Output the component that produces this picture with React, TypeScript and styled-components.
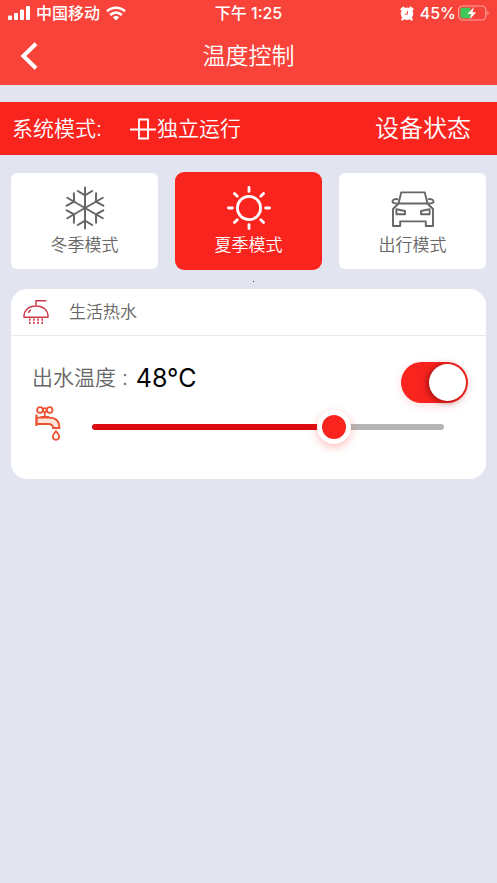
import React, { useState } from "react";
import styled, { createGlobalStyle, css } from "styled-components";

const GlobalStyle = createGlobalStyle`
  *, *::before, *::after { box-sizing: border-box; }
  body {
    margin: 0;
    background: #e2e4ef;
    font-family: Inter, "Noto Sans CJK SC", sans-serif;
    font-weight: 350;
    color: #666;
  }
  button {
    font: inherit;
    color: inherit;
    border: 0;
    padding: 0;
    background: none;
    cursor: pointer;
  }
`;

const Header = styled.header`
  background: #f8433b;
  color: #fff;
`;

const StatusBar = styled.div`
  display: grid;
  grid-template-columns: 1fr auto 1fr;
  align-items: center;
  height: 26px;
  padding: 0 8px;
  font-size: 16px;
  line-height: 24px;
  font-weight: 500;
`;

const StatusGroup = styled.div<{ $end?: boolean }>`
  display: flex;
  align-items: center;
  justify-content: ${(p) => (p.$end ? "flex-end" : "flex-start")};
  gap: 6px;
`;

const BatteryStatus = styled.span`
  display: flex;
  align-items: center;
  gap: 2px;
`;

const NavBar = styled.div`
  display: grid;
  grid-template-columns: 1fr auto 1fr;
  align-items: center;
  height: 59px;
  padding: 0 20px;
`;

const BackButton = styled.button`
  display: flex;
  justify-self: start;
`;

const Title = styled.h1`
  margin: 0;
  font-size: 23px;
  line-height: 32px;
  font-weight: 350;
`;

const SystemBar = styled.section`
  display: flex;
  align-items: center;
  height: 53px;
  margin-top: 17px;
  padding: 0 26px 0 12px;
  background: #fa241f;
  color: #fff;
  font-size: 21px;
  line-height: 32px;
`;

const RunMode = styled.span`
  display: flex;
  align-items: center;
  margin-left: 28px;
`;

const DeviceStatus = styled.button`
  margin-left: auto;
  font-size: 24px;
`;

const ModeList = styled.div`
  display: grid;
  grid-template-columns: repeat(3, 1fr);
  align-items: center;
  gap: 17px;
  padding: 17px 11px 0;
`;

const ModeCard = styled.button<{ $active: boolean }>`
  display: flex;
  flex-direction: column;
  align-items: center;
  justify-content: center;
  gap: 3px;
  height: 96px;
  border-radius: 6px;
  background: #fff;
  font-size: 17px;
  line-height: 24px;
  ${(p) =>
    p.$active &&
    css`
      height: 98px;
      border-radius: 9px;
      background: #fa241f;
      color: #fff;
    `}
`;

const Divider = styled.div`
  height: 19px;
  display: flex;
  justify-content: center;
  align-items: center;
  padding: 4px 0 0 10px;
  &::before {
    content: "";
    width: 1px;
    height: 1px;
    background: #333;
  }
`;

const Panel = styled.section`
  margin: 0 11px;
  border-radius: 16px;
  background: #fff;
`;

const PanelHeader = styled.div`
  display: flex;
  align-items: center;
  gap: 20px;
  height: 47px;
  padding: 0 12px;
  border-bottom: 1px solid #e6e9ee;
`;

const PanelTitle = styled.h2`
  margin: 0;
  font-size: 17px;
  line-height: 24px;
  font-weight: 350;
`;

const PanelBody = styled.div`
  padding: 26px 18px 28px 21px;
`;

const Row = styled.div`
  display: flex;
  align-items: flex-start;
`;

const Label = styled.label`
  font-size: 21px;
  line-height: 32px;
`;

const Value = styled.output`
  flex: 1;
  margin-left: 8px;
  color: #000;
  font-size: 25px;
  line-height: 32px;
  font-weight: 400;
`;

const Switch = styled.input`
  appearance: none;
  display: flex;
  width: 67px;
  height: 41px;
  margin: 0;
  padding: 2px;
  border-radius: 21px;
  background: #b5b5b5;
  box-shadow: 0 3px 8px rgba(250, 36, 31, 0.15);
  cursor: pointer;
  &::before {
    content: "";
    width: 37px;
    height: 37px;
    border-radius: 50%;
    background: #fff;
    box-shadow: -2px 1px 6px rgba(70, 0, 0, 0.55);
  }
  &:checked {
    justify-content: flex-end;
    background: #fa241f;
  }
`;

const SliderRow = styled.div`
  display: flex;
  align-items: center;
  gap: 30px;
  padding-right: 24px;
`;

const Slider = styled.input`
  appearance: none;
  flex: 1;
  min-width: 0;
  height: 48px;
  margin: 0;
  background: none;
  cursor: pointer;
  &::-webkit-slider-runnable-track {
    height: 6px;
    border-radius: 3px;
    background: linear-gradient(
      to right,
      #dc0b12 var(--fill),
      #b5b5b5 var(--fill)
    );
  }
  &::-webkit-slider-thumb {
    appearance: none;
    width: 34px;
    height: 34px;
    margin-top: -14px;
    border: 5px solid #fff;
    border-radius: 50%;
    background: #fa241f;
    box-shadow: 0 3px 8px rgba(250, 36, 31, 0.3);
  }
`;

const SignalIcon = () => (
  <svg width="22" height="14" viewBox="0 0 22 14" fill="#fff" aria-hidden="true">
    <rect x="0" y="9.5" width="4" height="4.5" rx="1" />
    <rect x="6" y="7" width="4" height="7" rx="1" />
    <rect x="12" y="3.5" width="4" height="10.5" rx="1" />
    <rect x="18" y="0" width="4" height="14" rx="1" />
  </svg>
);

const WifiIcon = () => (
  <svg width="20" height="15" viewBox="0 0 20 15" fill="none" stroke="#fff" strokeWidth="2.6" aria-hidden="true">
    <path d="M1 5.4C6 .6 14 .6 19 5.4" />
    <path d="M4.2 9C7.6 5.8 12.4 5.8 15.8 9" />
    <path d="M10 14.6 6.8 11.2C8.6 9.6 11.4 9.6 13.2 11.2Z" fill="#fff" stroke="none" />
  </svg>
);

const AlarmIcon = () => (
  <svg width="14" height="15" viewBox="0 0 14 15" aria-hidden="true">
    <path d="M1.6 3.4 3.4 1.8M12.4 3.4 10.6 1.8M3.4 12 2.4 13.4M10.6 12 11.6 13.4" stroke="#fff" strokeWidth="2.4" strokeLinecap="round" />
    <circle cx="7" cy="7.8" r="6.2" fill="#fff" />
    <path d="M7.4 4.8V8.2H4.8" fill="none" stroke="#f8433b" strokeWidth="1" />
  </svg>
);

const BatteryIcon = () => (
  <svg width="31" height="16" viewBox="0 0 31 16" aria-hidden="true">
    <rect x=".6" y="1" width="27.2" height="14" rx="4" fill="none" stroke="#fca29c" strokeWidth="1.2" />
    <path d="M29.4 5.8C31 6.6 31 9.4 29.4 10.2Z" fill="#fca29c" />
    <path d="M4.6 2.8H12.4V13.2H4.6A2.2 2.2 0 0 1 2.4 11V5A2.2 2.2 0 0 1 4.6 2.8Z" fill="#3fc75a" />
    <path d="M16 2 9.4 9H13.2L11.8 14.2 18.2 7.2H14.4Z" fill="#fff" />
  </svg>
);

const BackIcon = () => (
  <svg width="18" height="28" viewBox="0 0 18 28" fill="none" stroke="#fff" strokeWidth="4" aria-hidden="true">
    <path d="M16 1.8 3.4 14 16 26.2" />
  </svg>
);

const RunIcon = () => (
  <svg width="27" height="22" viewBox="0 0 27 22" fill="none" stroke="#fff" strokeWidth="1.8" aria-hidden="true">
    <path d="M0 11.5H26M9 1.5H18V20.5H9Z" />
  </svg>
);

const SnowIcon = () => (
  <svg width="44" height="44" viewBox="-22 -22 44 44" fill="none" stroke="#666" strokeWidth="2" strokeLinecap="round" aria-hidden="true">
    {[0, 60, 120, 180, 240, 300].map((angle) => (
      <path key={angle} transform={`rotate(${angle})`} d="M0 0V-20.5M-7.2-17 0-12.6 7.2-17" />
    ))}
  </svg>
);

const SunIcon = () => (
  <svg width="46" height="44" viewBox="-23 -22 46 44" fill="none" stroke="#fff" strokeWidth="2.8" strokeLinecap="round" aria-hidden="true">
    <circle r="11.6" />
    {[0, 45, 90, 135, 180, 225, 270, 315].map((angle) => (
      <path key={angle} transform={`rotate(${angle})`} d="M0-16.6V-20.6" />
    ))}
  </svg>
);

const CarIcon = () => (
  <svg width="44" height="44" viewBox="0 0 44 44" fill="none" stroke="#666" strokeWidth="1.9" strokeLinejoin="round" aria-hidden="true">
    <path d="M7.6 17.2 10.2 6.4H33.8L36.4 17.2" />
    <path d="M7.6 17.5H36.4L42 23V40H34.8V35.4H9.2V40H2V23Z" />
    <path d="M7.2 13.4C4.4 12.4 1.4 13.4 1.4 15.4S4 17.4 6.6 17.4M36.8 13.4C39.6 12.4 42.6 13.4 42.6 15.4S40 17.4 37.4 17.4" />
    <path d="M5.4 23.2 14 25V28.2H5.4ZM38.6 23.2 30 25V28.2H38.6Z" />
  </svg>
);

const ShowerIcon = () => (
  <svg width="26" height="26" viewBox="0 0 26 26" fill="none" stroke="#cc3b4a" strokeWidth="1.4" aria-hidden="true">
    <path d="M1 18.2C.6 11.5 5.6 7 13 7S25.4 11.5 25 18.2ZM13 7V1.8H23.4" />
    <path d="M5.6 13.8C5.8 12.4 6.6 11.4 8 11" strokeWidth="1.6" />
    <path d="M6.8 19.6V25M10.8 19.6V25M15 19.6V25M19.2 19.6V25" strokeDasharray="2.2 1" strokeWidth="1.6" />
  </svg>
);

const TapIcon = () => (
  <svg width="30" height="42" viewBox="0 0 30 42" fill="none" stroke="#eb5330" strokeWidth="1.8" strokeLinejoin="round" aria-hidden="true">
    <circle cx="8" cy="4" r="2.9" />
    <circle cx="17.6" cy="4" r="2.9" />
    <circle cx="12.8" cy="4" r="1.9" />
    <path d="M12.8 6V12M8.6 11H17" />
    <path d="M4.6 11.6H17C24 11.6 27.4 15.4 27.4 21.8H21C21 18.8 19.4 18 16 18H4.6Z" fill="#fde3da" />
    <path d="M4.4 8.4V20" strokeWidth="2" />
    <path d="M20 22H28.2" strokeWidth="2" />
    <path d="M24 25C25.6 27.6 27.2 28.8 27.2 30.6A3.2 3.2 0 0 1 20.8 30.6C20.8 28.8 22.4 27.6 24 25Z" />
  </svg>
);

const MODES = [
  { id: "winter", label: "冬季模式", Icon: SnowIcon },
  { id: "summer", label: "夏季模式", Icon: SunIcon },
  { id: "away", label: "出行模式", Icon: CarIcon },
];

const MIN_TEMP = 31;
const MAX_TEMP = 55;

export default function App() {
  const [mode, setMode] = useState("summer");
  const [temp, setTemp] = useState(48);
  const [on, setOn] = useState(true);
  const fill = `${((temp - MIN_TEMP) / (MAX_TEMP - MIN_TEMP)) * 100}%`;

  return (
    <>
      <GlobalStyle />
      <Header>
        <StatusBar>
          <StatusGroup>
            <SignalIcon />
            <span>中国移动</span>
            <WifiIcon />
          </StatusGroup>
          <span>下午 1:25</span>
          <StatusGroup $end>
            <AlarmIcon />
            <BatteryStatus>
              45%
              <BatteryIcon />
            </BatteryStatus>
          </StatusGroup>
        </StatusBar>
        <NavBar>
          <BackButton type="button" aria-label="返回">
            <BackIcon />
          </BackButton>
          <Title>温度控制</Title>
        </NavBar>
      </Header>
      <main>
        <SystemBar>
          <span>系统模式:</span>
          <RunMode>
            <RunIcon />
            独立运行
          </RunMode>
          <DeviceStatus type="button">设备状态</DeviceStatus>
        </SystemBar>
        <ModeList>
          {MODES.map(({ id, label, Icon }) => (
            <ModeCard
              key={id}
              type="button"
              $active={id === mode}
              aria-pressed={id === mode}
              onClick={() => setMode(id)}
            >
              <Icon />
              {label}
            </ModeCard>
          ))}
        </ModeList>
        <Divider />
        <Panel>
          <PanelHeader>
            <ShowerIcon />
            <PanelTitle>生活热水</PanelTitle>
          </PanelHeader>
          <PanelBody>
            <Row>
              <Label htmlFor="water-temp">出水温度 :</Label>
              <Value htmlFor="water-temp">{temp}°C</Value>
              <Switch
                type="checkbox"
                role="switch"
                aria-label="生活热水"
                checked={on}
                onChange={(e) => setOn(e.target.checked)}
              />
            </Row>
            <SliderRow>
              <TapIcon />
              <Slider
                id="water-temp"
                type="range"
                min={MIN_TEMP}
                max={MAX_TEMP}
                value={temp}
                onChange={(e) => setTemp(Number(e.target.value))}
                style={{ "--fill": fill } as React.CSSProperties}
              />
            </SliderRow>
          </PanelBody>
        </Panel>
      </main>
    </>
  );
}
